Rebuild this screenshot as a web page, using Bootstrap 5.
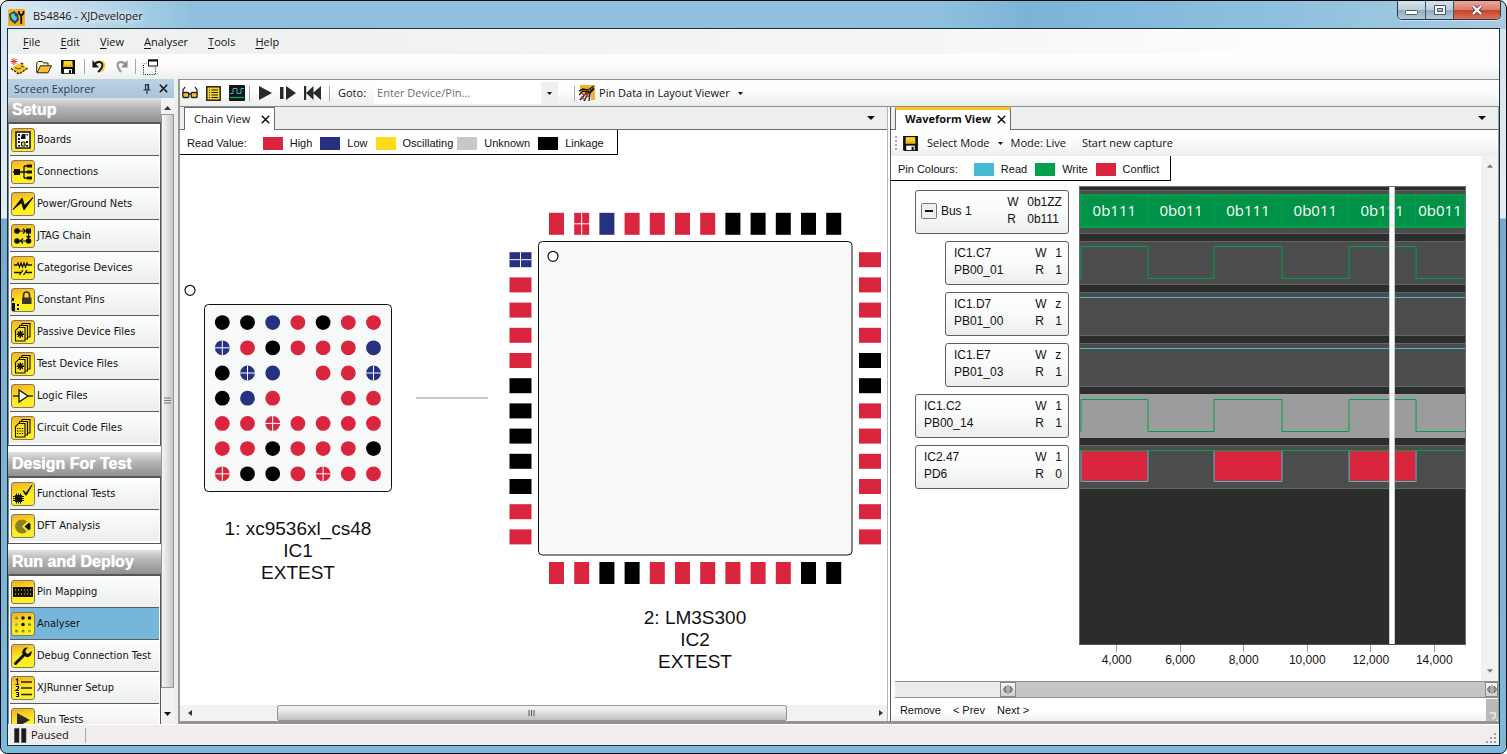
<!DOCTYPE html>
<html lang="en">
<head>
<meta charset="utf-8">
<meta name="viewport" content="width=device-width, initial-scale=1">
<title>B54846 - XJDeveloper</title>
<link href="https://cdn.jsdelivr.net/npm/bootstrap@5.3.0/dist/css/bootstrap.min.css" rel="stylesheet">
<style>
  :root { --ui: "Open Sans", "Noto Sans", sans-serif; --green: #00a14b; }
  body { font: 11px/16px var(--ui); color: #111; background: #fff; }
  a { color: inherit; text-decoration: none; }
  button { font: inherit; color: inherit; }
  svg { display: block; flex: none; }
  .plain { background: none; border: 0; padding: 0; }
  .min0 { min-width: 0; min-height: 0; }

  /* window frame */
  .win { height: 100vh; min-height: 480px; border: 1px solid #060b10; border-radius: 8px 8px 7px 7px; padding: 0 6px 7px 6px;
    background: linear-gradient(90deg, #d9e8f3 0, #bcd8ea 90px, #8fc1de 190px, #8fc1de 62%, #7db4d6 68%, #8cc0de 84%, #a9cbe1 100%) 0 0 / 100% 28px no-repeat,
      linear-gradient(#d3e4f1 28px, #e2edf6 217px, #74acd0 218px, #7ab3d4 60%, #7db9da) ; }
  .titlebar { height: 28px; padding-left: 1px; font-size: 11px; }
  .titlebar h1 { font: 11px/16px var(--ui); text-shadow: 0 0 6px #fff, 0 0 8px #fff; }
  .winbtns { height: 19px; margin-right: -1px; border: 1px solid #24394a; border-top: 0; border-radius: 0 0 5px 5px; overflow: hidden; box-shadow: 0 1px 0 #cfe4f1; }
  .winbtns button { border: 0; border-right: 1px solid #3d5568; width: 28px; padding: 0; background: linear-gradient(#d6e2ea, #bccedb 48%, #91a9bc 50%, #b4cbda); }
  .winbtns button:last-child { width: 46px; border-right: 0; background: linear-gradient(#eda899, #dd7d6c 48%, #c5402b 50%, #dd7257); }
  .client { border: 1px solid #17313f; background: #eee; min-height: 0; }
  .menubar { height: 25px; background: linear-gradient(90deg, #eef0f0, #f4f5f5 60%, #fdfdfd 85%); padding-left: 15px; gap: 20px; font-size: 11px; }
  .menubar u { text-underline-offset: 2px; }
  .toolstrip { background: linear-gradient(#fff, #fcfcfc 45%, #eceded); }
  .tools1 { height: 25px; padding-left: 2px; }
  .tools1 .tail { gap: 6px; }
  .vsep { width: 1px; height: 15px; background: #a7a9a9; }

  /* sidebar */
  .side { width: 166px; background: #fff; }
  .sidehead { height: 19px; background: linear-gradient(#bdd3e4, #a9c4da); padding: 0 6px; color: #2b3c49; }
  .sidehead h2 { font: 11px/16px var(--ui); }
  .group h3 { font: bold 16px/24px "Liberation Sans", Arial, sans-serif; color: #fff; height: 24px; padding-left: 4px; margin: 0; background: linear-gradient(#e0e1e1, #b5b7b6 40%, #8e9190); text-shadow: 0 0 1px #fff; }
  .group ul { border: 1px solid #555758; border-top-width: 2px; border-left-color: #808283; padding: 0 1px 1px; margin-bottom: 6px; }
  .group a { height: 32px; padding: 0 2px 0 1px; gap: 2px; border-bottom: 1px solid #5a5c5c; background: linear-gradient(#fefefe, #f4f6f6 50%, #eceeee); font: 11px/12px "DejaVu Sans Condensed", Verdana, sans-serif; white-space: nowrap; }
  .group li:last-child a { border-bottom-color: transparent; }
  .group a.active { background: #76b6da; }
  .tile { width: 24px; height: 24px; border: 1px solid #7d7a6a; border-radius: 3px; background: linear-gradient(165deg, #f3ac1e, #fbd021 30%, #ffee20 60%); }
  .sbar { background: #f1f2f2; }
  .thumb { background: linear-gradient(90deg, #f6f6f6, #dfe0e0 50%, #c5c7c7); border: 1px solid #949696; }
  .thumb.horiz { background: linear-gradient(#f6f6f6, #dcdede 50%, #bfc1c1); border-radius: 2px; }

  /* document area */
  .doc { border-left: 2px solid #979999; border-top: 1px solid #8f9191; border-bottom: 3px solid #929494; margin-left: 4px; background: #fff; }
  .tools2 { height: 27px; border-bottom: 1px solid #8c8e8e; padding-left: 2px; }
  .tools2 input { width: 167px; height: 22px; border: 0; padding: 0 3px 2px; font: 11px/20px var(--ui); background: #fff; outline: 0; }
  .tools2 input::placeholder { color: #6d6e70; opacity: 1; }
  .drop { width: 17px; height: 22px; background: #eeefef; }
  .tabs { height: 23px; background: #eeefef; border-bottom: 1px solid #6a6c6c; }
  .tabs .tabx { height: 23px; background: #fff; border: 1px solid #6a6c6c; border-bottom: 0; padding: 0 4px 0 9px; gap: 7px; }
  .tabs .tabx.hot { border-top: 3px solid #fcc41c; font-weight: 700; padding-bottom: 2px; gap: 2px; }
  .chainpane { flex: 708 1 0; border-right: 1px solid #b5b7b7; }
  .wavepane { flex: 608 1 0; margin-left: 2px; border-left: 1px solid #565858; border-right: 1px solid #9a9c9c; }
  .key { font: 11px/14px "Liberation Sans", Arial, sans-serif; border: 1px solid #000; border-width: 0 1px 1px 0; background: #fff; width: max-content; height: 25px; padding: 2px 11px 0 7px; }
  #readkey { padding-right: 13px; }
  .key i { width: 20px; height: 13px; margin-right: 7px; }
  .diagram text { font: 19px "Liberation Sans", Arial, sans-serif; text-anchor: middle; fill: #111; }

  /* waveform */
  .wavebody { padding: 1px 15px 0 24px; }
  .sig { height: 44px; margin-bottom: 7px; border: 1px solid #5d5f60; border-radius: 3px; background: linear-gradient(#fff, #f9fafa 50%, #eceeee); font: 12px/17px "Liberation Sans", Arial, sans-serif; padding: 0 6px 2px 8px; }
  .sig.child { margin-left: 30px; }
  .sig .wr { display: grid; grid-template-columns: 20px auto; }
  .plot { background: #2b2c2c; border: 1px solid #6c6e6e; border-bottom-color: #555; padding-top: 3px; height: 459px; }
  .track { height: 44px; margin-bottom: 7px; background: #4a4d4c; border: 1px solid #626564; border-width: 1px 0; position: relative; }
  .track.sel { background: #9b9d9c; border-color: #9b9d9c; }
  .track svg { width: 100%; height: 42px; }
  .track path { vector-effect: non-scaling-stroke; }
  .bus { height: 34px; top: 3px; position: absolute; left: 0; right: 0; background: #009247; border: 2px solid var(--green); border-left-width: 1px; border-right-width: 0; }
  .bus span { font: 15px/29px var(--ui); color: #fff; text-align: center; border-right: 1px solid var(--green); overflow: hidden; white-space: nowrap; }
  .cursorbar { position: absolute; top: 0; bottom: 0; width: 6px; background: #fff; border: 1px solid #c9cbcb; border-width: 0 1px; left: 80.2%; }
  .ticks { padding-left: 6px; font: 12px/14px "Liberation Sans", Arial, sans-serif; height: 23px; }
  .ticks span { width: 16.7%; text-align: center; }
  .ticks span::before { content: ""; display: block; width: 1px; height: 7px; margin: 0 auto 1px; background: #9a9c9c; }
  .range { height: 17px; border: 1px solid #8d8f8f; border-width: 1px 0; background: #ebecec; margin-left: 4px; }
  .knob { width: 16px; height: 15px; background: linear-gradient(#f8f8f8, #cfd1d1); border: 1px solid #898b8b; }
  .status { height: 21px; background: #f0edec; padding-left: 6px; border-top: 1px solid #fff; }
  .foot { height: 23px; font: 11px/16px "Liberation Sans", Arial, sans-serif; padding-left: 9px; gap: 12px; background: linear-gradient(#fff 55%, #f0f1f1); }
</style>
</head>
<body>
<svg width="0" height="0" class="position-absolute" aria-hidden="true">
  <defs>
    <symbol id="x" viewBox="0 0 9 9"><path d="M.8.8l7.400 7.400M8.200.8L.8 8.200" stroke="#111" stroke-width="1.500"/></symbol>
    <symbol id="dn" viewBox="0 0 7 4"><path d="M0 0h7L3.500 4z" fill="#111"/></symbol>
    <symbol id="save" viewBox="0 0 16 16"><path d="M1 1h14v14H2l-1-1z" fill="#111"/><path d="M3.500 2h9v6h-9z" fill="#fbd42a"/><path d="M3.500 5.500h9V8h-9z" fill="#e9b420"/><path d="M4 10h8v4.200H4z" fill="#fff"/><path d="M9 11h2v3.200H9z" fill="#111"/></symbol>
    <symbol id="undo" viewBox="0 0 16 16"><path d="M4 5c4-4 10-2 9 3-.3 2-2 4-4 5.500" fill="none" stroke="#f4cf2a" stroke-width="3.200"/><path d="M3 5.500C7 1.500 12.500 3 11.500 7.500 11 10 9.500 11.500 7 14" fill="none" stroke="#161616" stroke-width="2"/><path d="M1 1v8h7z" fill="#161616"/></symbol>
    <symbol id="files" viewBox="0 0 22 22"><g fill="#f7d224" stroke="#111" stroke-width="1.100"><path d="M10 2.500h8V16h-8z"/><path d="M7.500 4.500h8V18h-8z"/><path d="M6.500 6.500H13V20H3.500V9.500z" fill="#ffe326"/></g></symbol>

    <symbol id="i-boards" viewBox="0 0 22 22"><path d="M4 3h14v16H4z" fill="#fff" stroke="#111" stroke-width="1.500"/><path d="M6 5h2v2H6zM6 9h2v2H6zM6 12h2v2H6zM6 16h2v1.500H6zM14 12h2v2h-2zM14 16h2v1.500h-2zM14.500 5h1.500v1.500h-1.500zM10 5h3.500v5H9V8z" fill="#111"/><path d="M9.500 13h3.500v4H9.500z" fill="#fbd42a" stroke="#111"/></symbol>
    <symbol id="i-conn" viewBox="0 0 22 22"><path d="M1 11h11M12 5v12M12 5h4M12 11h4M12 17h4" fill="none" stroke="#111" stroke-width="1.300"/><path d="M2 8h6v6H2zM15 3.500h5v3h-5zM15 9.500h5v3h-5zM15 15.500h5v3h-5z" fill="#111"/></symbol>
    <symbol id="i-power" viewBox="0 0 22 22"><path d="M1 16.500L10 5l2.500 7.500L21 4.500 12 17 9.500 9.500z" fill="#111" stroke="#111"/></symbol>
    <symbol id="i-jtag" viewBox="0 0 22 22"><g fill="#111"><circle cx="5" cy="6" r="2.800"/><path d="M14 3.500h5v5h-5z"/><circle cx="16.500" cy="16" r="2.800"/><circle cx="5" cy="16" r="2.800"/></g><path d="M5 6h9M16.500 8v8M16 16H7M11 3.500L13.500 6 11 8.500M14.500 11l2 2 2-2M11 13.500L8.500 16l2.500 2.500" fill="none" stroke="#111" stroke-width="1.200"/></symbol>
    <symbol id="i-cat" viewBox="0 0 22 22"><path d="M2 8h3l1-2 1.500 4 1.500-4 1.500 4L12 6l1.500 4L15 6l1 2h4M2 15.500h7M14 15.500h6M7.500 18l3.500-5M11.500 18l3.500-5" fill="none" stroke="#111" stroke-width="1.300"/></symbol>
    <symbol id="i-const" viewBox="0 0 22 22"><path d="M11.500 9V6a3 3 0 016 0v3" fill="none" stroke="#37372d" stroke-width="1.700"/><path d="M10 8.500h9.500V15H10z" fill="#37372d"/><path d="M0 9h2v3H0zM0 14h3v8H0zM5 15h2v2H5zM5 19h2v2H5z" fill="#111"/></symbol>
    <symbol id="i-passive" viewBox="0 0 22 22"><use href="#files"/><path d="M8.300 9.500v7.500M4.700 13.200H12M5.700 10.600l5.200 5.200M10.900 10.600l-5.200 5.200" stroke="#111" stroke-width="1.400"/></symbol>
    <symbol id="i-logic" viewBox="0 0 22 22"><path d="M1 11h20" stroke="#111" stroke-width="1.300"/><path d="M7 5v12l9-6z" fill="#fff" stroke="#111" stroke-width="1.300"/></symbol>
    <symbol id="i-code" viewBox="0 0 22 22"><use href="#files"/><path d="M5 11.500h7M5 14h7M5 16.500h7" stroke="#111" stroke-width="1.200" stroke-dasharray="1.400 1"/></symbol>
    <symbol id="i-func" viewBox="0 0 22 22"><path d="M3 12h7v7H3z" fill="#111"/><path d="M1 13.500h11M1 15.500h11M1 17.500h11M4.500 10.500v10M6.500 10.500v10M8.500 10.500v10" stroke="#111"/><path d="M11 7.500l3 2.500 6-8-5.500 10h-1z" fill="#222" stroke="#222"/></symbol>
    <symbol id="i-dft" viewBox="0 0 22 22"><path d="M15 6.500A7 7 0 1015 16.500L10 11.500z" fill="#8a8420"/><path d="M12.500 11.500l4.500-4 1.500 2v4l-1.500 2z" fill="#111"/></symbol>
    <symbol id="i-pin" viewBox="0 0 22 22"><path d="M1 6h20v10H1z" fill="#111"/><path d="M3 9h17M3 13h17" stroke="#fbd42a" stroke-dasharray="1.200 1.800"/></symbol>
    <symbol id="i-ana" viewBox="0 0 22 22"><g fill="#8a8420"><circle cx="4.500" cy="5" r="1.600"/><circle cx="17.500" cy="11.500" r="1.600"/><circle cx="4.500" cy="18" r="1.600"/><circle cx="11" cy="18" r="1.600"/></g><g fill="#c2a81f"><circle cx="4.500" cy="11.500" r="1.600"/><circle cx="17.500" cy="18" r="1.600"/></g><g fill="#111"><circle cx="11" cy="5" r="1.800"/><circle cx="17.500" cy="5" r="1.800"/><circle cx="11" cy="11.500" r="1.800"/></g></symbol>
    <symbol id="i-debug" viewBox="0 0 22 22"><path d="M3.500 18.500L12 10" stroke="#111" stroke-width="3" stroke-linecap="round"/><path d="M16 2.500a5 5 0 00-5.500 6.500l4 3.200A4.800 4.800 0 0019.500 6L16 9l-2.500-1.500.2-2.500z" fill="#111"/></symbol>
    <symbol id="i-setup" viewBox="0 0 22 22"><path d="M9 5h11M9 11h11M9 17.500h11" stroke="#222" stroke-width="1.500"/><path d="M4 3l1.500-1v5M3.500 7.500H7M4 9.500h2.500v2L4 13.500h3M4 15.500h2.500v4H4M4.500 17.500h2" fill="none" stroke="#111" stroke-width="1.100"/></symbol>
    <symbol id="i-run" viewBox="0 0 22 22"><path d="M5 4v14l13-7z" fill="#2a2a26"/></symbol>
  </defs>
</svg>

<div class="win d-flex flex-column">
  <header class="titlebar d-flex align-items-start justify-content-between">
    <div class="d-flex align-items-center gap-1 pt-1">
      <svg class="mt-1" width="17" height="17" viewBox="0 0 17 17"><rect width="17" height="17" rx="1.500" fill="#f9ad1c"/><path d="M1 5l5-3 4 3 1 6-4 4-5-4z" fill="#174f63"/><path d="M3 5.500l3-1.500 1 3 2 1-1 4-3-1-2-3z" fill="#62c4dc"/><path d="M11 2v2.500L12.500 6h1.500L15.500 4.500V2M13.200 6v9" fill="none" stroke="#111" stroke-width="1.800"/></svg>
      <h1 class="m-0 ms-1">B54846 - XJDeveloper</h1>
    </div>
    <div class="winbtns d-flex">
      <button aria-label="Minimise"><svg class="mx-auto mt-1" width="13" height="5" viewBox="0 0 13 5"><rect x=".500" y=".500" width="12" height="4" rx="1" fill="#fff" stroke="#4a5a67"/></svg></button>
      <button aria-label="Maximise"><svg class="mx-auto" width="12" height="10" viewBox="0 0 12 10"><path d="M.500.500h11v9H.500zM3.500 3.500v3h5v-3z" fill="#fff" fill-rule="evenodd" stroke="#4a5a67"/></svg></button>
      <button aria-label="Close"><svg class="mx-auto" width="12" height="10" viewBox="0 0 12 10"><path d="M2 1l8 8M10 1L2 9" stroke="#5c3a3a" stroke-width="4"/><path d="M2 1l8 8M10 1L2 9" stroke="#fff" stroke-width="2.400"/></svg></button>
    </div>
  </header>

  <div class="client d-flex flex-column flex-grow-1">
    <nav class="menubar d-flex align-items-center flex-shrink-0" aria-label="Menu">
      <a href="#"><u>F</u>ile</a><a href="#"><u>E</u>dit</a><a href="#"><u>V</u>iew</a><a href="#"><u>A</u>nalyser</a><a href="#"><u>T</u>ools</a><a href="#"><u>H</u>elp</a>
    </nav>
    <div class="toolstrip tools1 d-flex align-items-center gap-2 flex-shrink-0">
      <button class="plain" aria-label="New"><svg width="18" height="17" viewBox="0 0 18 17"><path d="M1 10l9-5 8 5-9 6z" fill="#f7c62b"/><path d="M1 10.500l8 5.500 9-6M11 5l3 2" fill="none" stroke="#2e2206" stroke-width="1.300" stroke-dasharray="2.500 1"/><path d="M5 9.500l3 1.500 3-1M11 8l3 1" stroke="#5b4308" fill="none"/><path d="M4 0v7M.500 3.500h7M1.500 1l5 5M6.500 1l-5 5" stroke="#e0352b"/></svg></button>
      <button class="plain" aria-label="Open"><svg width="16" height="14" viewBox="0 0 16 14"><path d="M.700 12.500V3l1.500-1.500h4L8 3h4v2.500" fill="#fff6c4" stroke="#222"/><path d="M1 12.800l3.500-7h11l-3.500 7z" fill="#f7bf2c" stroke="#222"/></svg></button>
      <button class="plain" aria-label="Save"><svg width="16" height="16"><use href="#save"/></svg></button>
      <div class="tail d-flex align-items-center">
        <span class="vsep"></span>
        <button class="plain" aria-label="Undo"><svg width="16" height="15"><use href="#undo"/></svg></button>
        <button class="plain" aria-label="Redo"><svg width="16" height="15" viewBox="0 0 16 16"><path d="M13 5.500C9 1.500 3.500 3 4.500 7.500 5 10 6.500 11.500 8 14" fill="none" stroke="#9c9e9e" stroke-width="2.500"/><path d="M15 1v8H8z" fill="#8b8d8d"/></svg></button>
        <span class="vsep"></span>
        <button class="plain" aria-label="Layout"><svg width="16" height="16" viewBox="0 0 16 16"><path d="M1.500 6v9.500h12V8" fill="none" stroke="#111" stroke-dasharray="1 1.200"/><path d="M0 4.500h6" stroke="#caa414" stroke-dasharray="1 1"/><rect x="6.500" y="1" width="9" height="6" fill="#fff" stroke="#111"/><path d="M6 1.500h10" stroke="#111" stroke-width="2"/></svg></button>
      </div>
    </div>

    <main class="d-flex flex-grow-1 min0">
      <aside class="side d-flex flex-column flex-shrink-0">
        <div class="sidehead d-flex align-items-center gap-2 flex-shrink-0">
          <h2 class="m-0 me-auto">Screen Explorer</h2>
          <button class="plain" aria-label="Pin"><svg width="8" height="10" viewBox="0 0 8 10"><path d="M2.500 6V.700h3V6M5 .700V6M.500 6h7M4 6v4" fill="none" stroke="#26343f" stroke-width="1.200"/></svg></button>
          <button class="plain" aria-label="Close panel"><svg width="9" height="9"><use href="#x"/></svg></button>
        </div>
        <div class="d-flex flex-grow-1 overflow-hidden">
          <nav class="flex-grow-1 overflow-hidden" id="groups" aria-label="Screens"></nav>
          <div class="sbar d-flex flex-column align-items-center py-2" style="width:13px">
            <svg class="mb-1" width="7" height="4" viewBox="0 0 7 4"><path d="M0 4h7L3.500 0z" fill="#333"/></svg>
            <div class="thumb w-100 flex-grow-1 d-flex align-items-center justify-content-center"><svg width="7" height="8" viewBox="0 0 7 8"><path d="M0 1h7M0 3.500h7M0 6h7" stroke="#777"/></svg></div>
            <svg class="mt-4" width="7" height="4"><use href="#dn"/></svg>
          </div>
        </div>
      </aside>

      <section class="doc d-flex flex-column flex-grow-1 min0">
        <div class="toolstrip tools2 d-flex align-items-center flex-shrink-0">
          <button class="plain" aria-label="Read"><svg width="16" height="14" viewBox="0 0 16 14"><path d="M1 8V4l2-3M15 8V4l-2-3M7 8h2" fill="none" stroke="#222" stroke-width="1.300"/><rect x=".800" y="6.500" width="6" height="5" rx="1" fill="#f9b928" stroke="#222" stroke-width="1.300"/><rect x="9.200" y="6.500" width="6" height="5" rx="1" fill="#f9b928" stroke="#222" stroke-width="1.300"/></svg></button>
          <button class="plain ms-2" aria-label="List"><svg width="15" height="15" viewBox="0 0 15 15"><rect x=".800" y=".800" width="13.400" height="13.400" fill="#fbd42a" stroke="#222" stroke-width="1.500"/><path d="M3 4h1M3 6.500h1M3 9h1M3 11.500h1M5.500 4H12M5.500 6.500H12M5.500 9H12M5.500 11.500H12" stroke="#222" stroke-width="1.200"/></svg></button>
          <button class="plain ms-2" aria-label="Waveform"><svg width="16" height="16" viewBox="0 0 16 16"><rect width="16" height="16" rx="1" fill="#151515"/><path d="M1 8.500h3v-5h4v5h4v-5h3" fill="none" stroke="#35b4d0"/><path d="M1 12.500h14" stroke="#13a54c" stroke-width="1.300"/></svg></button>
          <span class="vsep ms-1"></span>
          <button class="plain ms-1" aria-label="Run"><svg class="ms-1" width="14" height="14" viewBox="0 0 14 14"><path d="M1 0v14l13-7z" fill="#252b2d"/></svg></button>
          <button class="plain ms-1" aria-label="Step"><svg class="ms-1" width="16" height="14" viewBox="0 0 16 14"><path d="M0 1h3.500v12H0zM6 0v14l10-7z" fill="#252b2d"/></svg></button>
          <button class="plain ms-1" aria-label="Rewind"><svg class="ms-1" width="17" height="14" viewBox="0 0 17 14"><path d="M0 0h2.200v14H0zM9.500 0v14L2 7zM17 0v14L9 7z" fill="#252b2d"/></svg></button>
          <span class="vsep ms-2 me-2"></span>
          <label for="goto" class="me-1">Goto:</label>
          <input id="goto" class="ms-1" placeholder="Enter Device/Pin...">
          <button class="plain drop" aria-label="Show devices"><svg class="mx-auto" width="5" height="3"><use href="#dn"/></svg></button>
          <span class="vsep ms-3 me-1"></span>
          <button class="plain d-flex align-items-center gap-1 text-nowrap">
            <svg width="16" height="16" viewBox="0 0 16 16"><path d="M1 0h15v15h-4V9L7 8H1z" fill="#f5b12a"/><path d="M0 6l4-2 5 1 6-4M0 10l4-4 6 1 5-4M1 15l7-8M5 16l5-9M10 16l1-8 4-4" fill="none" stroke="#1c1a14" stroke-width="1.400"/><path d="M3 8l3 3M2 12l3 2M7 9l3 3" stroke="#d2332e" stroke-width="1.600"/></svg>
            Pin Data in Layout Viewer
            <svg class="ms-1" width="5" height="3"><use href="#dn"/></svg>
          </button>
        </div>

        <div class="d-flex flex-grow-1 min0">
          <section class="chainpane d-flex flex-column overflow-hidden">
            <div class="tabs d-flex ps-1 pe-2 flex-shrink-0 align-items-center justify-content-between">
              <div class="tabx d-flex align-items-center align-self-start">Chain View <button class="plain" aria-label="Close Chain View"><svg class="ms-1" width="9" height="9"><use href="#x"/></svg></button></div>
              <button class="plain" aria-label="Tab list"><svg class="me-1" width="8" height="4" viewBox="0 0 7 4" preserveAspectRatio="none"><use href="#dn"/></svg></button>
            </div>
            <div class="flex-grow-1 overflow-hidden">
              <div class="key d-flex align-items-center" id="readkey"></div>
              <svg class="diagram" id="chain" width="707" height="551" viewBox="180 155 707 551" role="img" aria-label="JTAG chain"></svg>
            </div>
            <div class="sbar d-flex align-items-center flex-shrink-0 px-1" style="height:16px">
              <svg class="ms-1" width="4" height="6" viewBox="0 0 4 6"><path d="M4 0v6L0 3z" fill="#333"/></svg>
              <div class="flex-grow-1 mx-2 h-100 d-flex"><div class="thumb horiz h-100 d-flex align-items-center justify-content-center" style="margin-left:11.500%;width:76%"><svg width="8" height="6" viewBox="0 0 8 6"><path d="M1 0v6M3.500 0v6M6 0v6" stroke="#555"/></svg></div></div>
              <svg width="4" height="6" viewBox="0 0 4 6"><path d="M0 0v6l4-3z" fill="#333"/></svg>
            </div>
          </section>

          <section class="wavepane d-flex flex-column overflow-hidden">
            <div class="tabs d-flex ps-1 pe-2 flex-shrink-0 align-items-center justify-content-between">
              <div class="tabx hot d-flex align-items-center align-self-start">Waveform View <button class="plain" aria-label="Close Waveform View"><svg class="ms-1" width="9" height="9"><use href="#x"/></svg></button></div>
              <button class="plain" aria-label="Tab list"><svg class="me-1" width="8" height="4" viewBox="0 0 7 4" preserveAspectRatio="none"><use href="#dn"/></svg></button>
            </div>
            <div class="toolstrip d-flex align-items-center flex-shrink-0 ps-1" style="height:26px">
              <svg width="3" height="15" viewBox="0 0 3 15"><path d="M1 0v15" stroke="#a9abab" stroke-width="2" stroke-dasharray="2 2"/></svg>
              <button class="plain ms-1" aria-label="Save capture"><svg width="17" height="17"><use href="#save"/></svg></button>
              <button class="plain d-flex align-items-center gap-2 ms-2">Select Mode <svg width="5" height="3"><use href="#dn"/></svg></button>
              <span class="ms-2">Mode: Live</span>
              <button class="plain ms-2 ps-2">Start new capture</button>
            </div>
            <div class="d-flex flex-grow-1 overflow-hidden">
              <div class="flex-grow-1 overflow-hidden">
                <div class="key d-flex align-items-center" id="pinkey"></div>
                <div class="wavebody d-flex">
                  <div class="pt-2" style="width:154px" id="sigs"></div>
                  <div class="flex-grow-1" style="margin-left:10px">
                    <div class="plot position-relative mt-1" id="plot"></div>
                    <div class="ticks d-flex"><span>4,000</span><span>6,000</span><span>8,000</span><span>10,000</span><span>12,000</span><span>14,000</span></div>
                  </div>
                </div>
              </div>
              <div class="sbar d-flex flex-column align-items-center justify-content-between py-2" style="width:17px">
                <svg width="6" height="4" viewBox="0 0 7 4"><path d="M0 4h7L3.500 0z" fill="#777"/></svg>
                <svg width="6" height="4" viewBox="0 0 7 4"><path d="M0 0h7L3.500 4z" fill="#777"/></svg>
              </div>
            </div>
            <div class="range d-flex flex-shrink-0">
              <div style="width:17.400%"></div>
              <div class="d-flex justify-content-between flex-grow-1" style="background:#c4c6c5">
                <div class="knob d-flex align-items-center justify-content-center"><svg width="10" height="9" viewBox="0 0 10 9"><path d="M5 0v9M3 1v7L0 4.500zM7 1v7l3-3.500z" fill="#999" stroke="#555" stroke-width=".800"/></svg></div>
                <div class="knob d-flex align-items-center justify-content-center" style="width:13px"><svg width="10" height="9" viewBox="0 0 10 9"><path d="M5 0v9M3 1v7L0 4.500zM7 1v7l3-3.500z" fill="#999" stroke="#555" stroke-width=".800"/></svg></div>
              </div>
            </div>
            <div class="foot d-flex align-items-center flex-shrink-0">
              <button class="plain">Remove</button><button class="plain">&lt; Prev</button><button class="plain">Next &gt;</button>
              <svg class="ms-auto" width="12" height="22" viewBox="0 0 12 22"><path d="M0 0h12v18q0 4-4 4H0z" fill="#b9bbbb"/><path d="M4 14h5v4l-3 2" fill="none" stroke="#eee" stroke-width="1.500"/></svg>
            </div>
          </section>
        </div>
      </section>
    </main>

    <footer class="status d-flex align-items-center flex-shrink-0">
      <svg width="13" height="15" viewBox="0 0 13 15"><path d="M.500.500h4.500v14H.500zM7.500.500H12v14H7.500z" fill="#1a1a1a" stroke="#444" stroke-width=".600"/></svg>
      <span class="ms-1">Paused</span><span class="vsep ms-3"></span>
      <svg class="ms-auto align-self-end" width="13" height="13" viewBox="0 0 13 13"><path d="M8 1h2v2H8zM4 5h2v2H4zM8 5h2v2H8zM0 9h2v2H0zM4 9h2v2H4zM8 9h2v2H8z" fill="#9c9e9e"/></svg>
    </footer>
  </div>
</div>

<script>
const groups = [
  ['Setup', [['boards','Boards'],['conn','Connections'],['power','Power/Ground Nets'],['jtag','JTAG Chain'],['cat','Categorise Devices'],['const','Constant Pins'],['passive','Passive Device Files'],['passive','Test Device Files'],['logic','Logic Files'],['code','Circuit Code Files']]],
  ['Design For Test', [['func','Functional Tests'],['dft','DFT Analysis']]],
  ['Run and Deploy', [['pin','Pin Mapping'],['ana','Analyser'],['debug','Debug Connection Test'],['setup','XJRunner Setup'],['run','Run Tests']]]
];
document.getElementById('groups').innerHTML = groups.map(([name, items]) =>
  `<div class="group"><h3>${name}</h3><ul class="list-unstyled">${items.map(([icon, text]) =>
    `<li><a href="#" class="d-flex align-items-center${text === 'Analyser' ? ' active' : ''}"><span class="tile"><svg width="22" height="22"><use href="#i-${icon}"/></svg></span>${text}</a></li>`).join('')}</ul></div>`).join('');

const key = (id, title, first, rows) => document.getElementById(id).innerHTML = `<span class="me-${first}">${title}</span>` +
  rows.map(([c, t, m]) => `<i style="background:${c}"></i><span class="me-${m}">${t}</span>`).join('');
key('readkey', 'Read Value:', 3, [['#da253f','High',2],['#26327f','Low',2],['#ffdb20','Oscillating',1],['#c8c9c6','Unknown',2],['#000','Linkage',0]]);
key('pinkey', 'Pin Colours:', 3, [['#45bad2','Read',2],['#00a14b','Write',2],['#da253f','Conflict',0]]);

/* device diagram: R high, B low, K linkage; lower case marks a driven pin */
const fill = { R: '#da253f', B: '#26327f', K: '#000' };
const cross = (x, y, w, h) => `<path d="M${x - w} ${y}h${2 * w}M${x} ${y - h}v${2 * h}" stroke="#fff" stroke-width="1"/>`;
let s = '<rect x="204.500" y="304.500" width="187" height="187" rx="4" fill="#f8f9f9" stroke="#111"/><circle cx="190" cy="290.300" r="5" fill="#fff" stroke="#111" stroke-width="1.200"/><path d="M416 398h72" stroke="#c6c7c6" stroke-width="2"/>';
['KKBRKRR', 'bRKRRRB', 'KbB.RRb', 'KBR..RR', 'RRrRRRR', 'RRKRRRK', 'rKKRrRR'].forEach((row, j) => [...row].forEach((p, i) => {
  if (p === '.') return;
  const x = 222.3 + 25.2 * i, y = 322.6 + 25.2 * j;
  s += `<circle cx="${x}" cy="${y}" r="7.400" fill="${fill[p.toUpperCase()]}"/>` + (p > 'Z' ? cross(x, y, 7.4, 7.4) : '');
}));
s += '<rect x="538.500" y="241.500" width="313.500" height="313.500" rx="4" fill="#f8f9f9" stroke="#111"/><circle cx="553" cy="256.300" r="5" fill="#fff" stroke="#111" stroke-width="1.200"/>';
const side = (pins, x, y, dx, dy, w, h) => [...pins].forEach((p, i) => {
  const cx = x + dx * i, cy = y + dy * i;
  s += `<rect x="${cx - w / 2}" y="${cy - h / 2}" width="${w}" height="${h}" fill="${fill[p.toUpperCase()]}"/>` + (p > 'Z' ? cross(cx, cy, w / 2, h / 2) : '');
});
side('RrBRRRRKKKKK', 556.5, 223.8, 25.2, 0, 15, 22);
side('RRKKRRRRRRKK', 556.5, 573, 25.2, 0, 15, 22);
side('bRRRRKKKKKRR', 520.5, 259.7, 0, 25.2, 22, 15);
side('RRRRKKRRRRRR', 870, 259.7, 0, 25.2, 22, 15);
[['1: xc9536xl_cs48', 298, 535], ['IC1', 298, 557], ['EXTEST', 298, 579], ['2: LM3S300', 695, 624], ['IC2', 695, 646], ['EXTEST', 695, 668]].forEach(([t, x, y]) => s += `<text x="${x}" y="${y}">${t}</text>`);
document.getElementById('chain').innerHTML = s;

/* signals and their traces */
const sigs = [['Bus 1','','0b1ZZ','0b111',0],['IC1.C7','PB00_01',1,1,1],['IC1.D7','PB01_00','z',1,1],['IC1.E7','PB01_03','z',1,1],['IC1.C2','PB00_14',1,1,0],['IC2.47','PD6',1,0,0]];
document.getElementById('sigs').innerHTML = sigs.map(([a, b, w, r, child]) =>
  `<div class="sig d-flex align-items-center${child ? ' child' : ''}">` +
  (b ? '' : '<button class="plain me-1" aria-label="Collapse" style="margin-left:-3px"><svg width="16" height="16" viewBox="0 0 16 16"><rect x=".500" y=".500" width="15" height="15" rx="1" fill="#eee" stroke="#777"/><path d="M4 8h8" stroke="#111" stroke-width="2"/></svg></button>') +
  `<div class="me-auto">${a}${b ? '<br>' + b : ''}</div><div class="wr"><span>W</span><span>${w}</span><span>R</span><span>${r}</span></div></div>`).join('');
const W = 385, edges = [1, 68, 134, 202, 269, 336];
const wave = 'M0 36.500H1' + edges.map((x, i) => `V${i % 2 ? 36.5 : 4.5}H${edges[i + 1] || W}`).join('');
const trace = body => `<svg viewBox="0 0 ${W} 42" preserveAspectRatio="none">${body}</svg>`;
const line = (d, c, f = 'none') => `<path d="${d}" fill="${f}" stroke="${c}"/>`;
const clock = trace(line(wave, '#00a14b')), flat = trace(line(`M0 4.500H${W}`, '#45bad2'));
const clash = trace([0, 2, 4].map(i => line(`M${edges[i]} 4.500V35.500H${edges[i + 1]}V4.500z`, '#45bad2', '#da253f')).join('') + line(`M0 4.500H${W}`, '#00a14b'));
const bus = '<div class="bus d-flex">' + ['0b111','0b011','0b111','0b011','0b111','0b011'].map((t, i) => `<span style="width:${((edges[i + 1] || W) - (i ? edges[i] : 0)) / W * 100}%">${t}</span>`).join('') + '</div>';
document.getElementById('plot').innerHTML = [bus, clock, flat, flat, clock, clash].map((t, i) => `<div class="track${i === 4 ? ' sel' : ''}">${t}</div>`).join('') + '<div class="cursorbar"></div>';
</script>
<script src="https://cdn.jsdelivr.net/npm/bootstrap@5.3.0/dist/js/bootstrap.bundle.min.js"></script>
</body>
</html>
